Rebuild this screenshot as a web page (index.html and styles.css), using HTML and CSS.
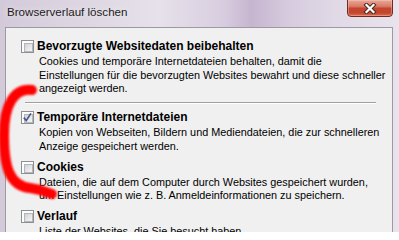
FILE: index.html
```html
<!DOCTYPE html>
<html lang="de">
<head>
<meta charset="utf-8">
<title>Browserverlauf löschen</title>
<link rel="stylesheet" href="styles.css">
</head>
<body>
<div class="window">
  <div class="titlebar">
    <span class="title">Browserverlauf löschen</span>
    <div class="close">
      <svg class="close-x" width="14" height="11" viewBox="0 0 14 11">
        <path d="M3.5 2 L10.5 9 M10.5 2 L3.5 9" stroke="#4a2a26" stroke-width="4.2" stroke-linecap="square" fill="none"/>
        <path d="M3.5 2 L10.5 9 M10.5 2 L3.5 9" stroke="#ffffff" stroke-width="2.2" stroke-linecap="square" fill="none"/>
      </svg>
    </div>
  </div>
  <div class="client">
    <div class="item">
      <div class="row"><span class="cb"></span><span class="label">Bevorzugte Websitedaten beibehalten</span></div>
      <p class="desc">Cookies und temporäre Internetdateien behalten, damit die<br>Einstellungen für die bevorzugten Websites bewahrt und diese schneller<br>angezeigt werden.</p>
    </div>
    <hr class="sep">
    <div class="item">
      <div class="row"><span class="cb checked"><svg class="tick" width="11" height="11" viewBox="0 0 11 11"><path d="M1.8 5.6 L4.2 8.6 L8.9 1.4" stroke="#475a8c" stroke-width="1.7" fill="none"/></svg></span><span class="label">Temporäre Internetdateien</span></div>
      <p class="desc">Kopien von Webseiten, Bildern und Mediendateien, die zur schnelleren<br>Anzeige gespeichert werden.</p>
    </div>
    <div class="item">
      <div class="row"><span class="cb"></span><span class="label">Cookies</span></div>
      <p class="desc">Dateien, die auf dem Computer durch Websites gespeichert wurden,<br>um Einstellungen wie z. B. Anmeldeinformationen zu speichern.</p>
    </div>
    <div class="item">
      <div class="row"><span class="cb"></span><span class="label">Verlauf</span></div>
      <p class="desc">Liste der Websites, die Sie besucht haben.</p>
    </div>
  </div>
  <svg class="mark" width="399" height="232" viewBox="0 0 399 232">
    <defs>
      <filter id="soft" x="-20%" y="-20%" width="140%" height="140%">
        <feGaussianBlur stdDeviation="1.3"/>
      </filter>
    </defs>
    <path d="M32 90 C14 88 4 105 4 135 C4 168 10 186 30 188 C38 189 45 191 52 194" stroke="#ff0000" stroke-width="10" stroke-linecap="round" fill="none" filter="url(#soft)"/>
  </svg>
</div>
</body>
</html>
```

FILE: styles.css
```css
* {
  box-sizing: border-box;
}

body {
  margin: 0;
  font-family: "Liberation Sans", Arial, sans-serif;
}

.window {
  position: relative;
  width: 399px;
  height: 232px;
  overflow: hidden;
  display: flex;
  flex-direction: column;
  background: linear-gradient(90deg, #d3cad9 0%, #ddd6e2 20%, #e6e1ea 40%, #d8cde0 56%, #c6b5cf 63%, #d6cbde 72%, #e2dbe7 86%, #e8e3ec 100%);
}

.titlebar {
  flex: none;
  height: 27px;
  display: flex;
  justify-content: space-between;
  align-items: flex-start;
  padding: 0 6px 0 7px;
}

.title {
  margin-top: 4px;
  font-size: 11.6px;
  line-height: 16px;
  color: #1b1b1b;
  text-shadow: 0 0 6px rgba(255, 255, 255, 0.7);
}

.close {
  width: 46px;
  height: 18px;
  margin-top: -1px;
  border: 1px solid #6e2b22;
  border-radius: 0 0 4px 4px;
  background: linear-gradient(#e9a897 0%, #d97a66 40%, #c3452f 52%, #c4462f 80%, #dd6a50 100%);
  box-shadow: inset 0 0 0 1px rgba(255, 220, 210, 0.35);
  display: flex;
  align-items: center;
  justify-content: center;
}

.client {
  flex: 1;
  margin: 0 6px 0 5px;
  border: 1px solid #9d98a2;
  border-bottom: none;
  background: #f0f0f0;
  padding: 11px 0 0 15px;
}

.item {
  margin-bottom: 6.5px;
}

.row {
  display: flex;
  align-items: center;
  height: 15px;
}

.cb {
  position: relative;
  flex: none;
  width: 13px;
  height: 13px;
  border: 1px solid #8f8f8f;
  background: #fdfdfd;
  padding: 2px;
}

.cb::before {
  content: "";
  display: block;
  width: 7px;
  height: 7px;
  border: 1px solid #b3b7bd;
  background: linear-gradient(135deg, #cfd2d7, #f7f7f7);
}

.tick {
  position: absolute;
  left: 0;
  top: 0;
}

.label {
  margin-left: 3px;
  font-size: 12px;
  font-weight: bold;
  line-height: 15px;
  color: #000;
  white-space: nowrap;
}

.desc {
  margin: 1px 0 0 18px;
  font-size: 10.85px;
  line-height: 13.5px;
  color: #000;
  white-space: nowrap;
}

.sep {
  height: 0;
  margin: 0 16px 6px 4px;
  border: none;
  border-top: 1px solid #a0a0a0;
  border-bottom: 1px solid #ffffff;
}

.mark {
  position: absolute;
  left: 0;
  top: 0;
  pointer-events: none;
}
```
